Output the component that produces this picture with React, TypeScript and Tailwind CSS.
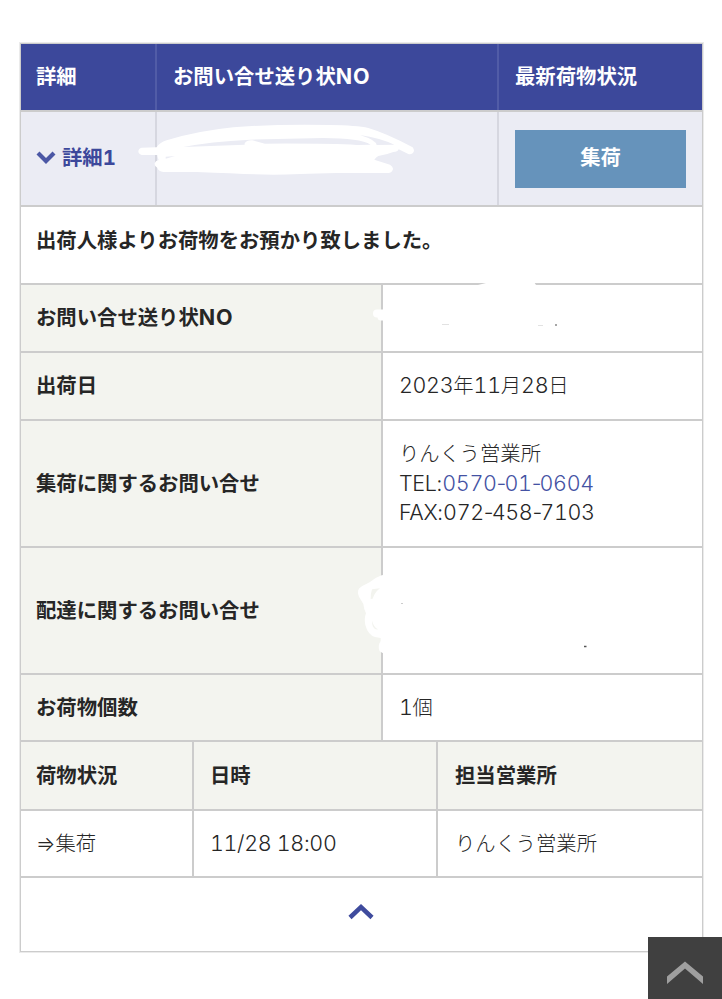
import React from 'react';
import clsx from 'clsx';

// Digits are even-width, hyphens keep their narrow form
const Latin: React.FC<{ children: string }> = ({ children }) => (
  <span className="text-[21.5px] leading-none tracking-[-0.35px] tabular-nums">
    {children.split(/(-)/).map((part, i) =>
      part === '-' ? <span key={i} className="proportional-nums tracking-[-1.800px]">-</span> : part
    )}
  </span>
);

const InvoiceNoLabel = () => (
  <span>
    お問い合せ送り状<span className="text-[21.5px] leading-none tracking-[0.9px]">NO</span>
  </span>
);

const details = [
  { label: <InvoiceNoLabel />, height: 'h-[68px]' },
  {
    label: '出荷日',
    height: 'h-[68px]',
    value: (
      <>
        <Latin>2023</Latin>年<Latin>11</Latin>月<Latin>28</Latin>日
      </>
    ),
  },
  {
    label: '集荷に関するお問い合せ',
    height: 'h-[127px]',
    value: (
      <>
        りんくう営業所
        <br />
        <Latin>TEL</Latin>:<a className="text-[#4452a3]"><Latin>0570-01-0604</Latin></a>
        <br />
        <Latin>FAX</Latin>:<Latin>072-458-7103</Latin>
      </>
    ),
  },
  { label: '配達に関するお問い合せ', height: 'h-[127px]' },
  { label: 'お荷物個数', height: 'h-[67px]', value: <><Latin>1</Latin>個</> },
];

const line = 'border-[#cccccc]';

const Scribbles: React.FC = () => (
  <svg className="pointer-events-none absolute left-0 top-0" width="722" height="999" fill="none" stroke="#fff" strokeLinecap="round" strokeLinejoin="round">
    {/* Invoice number in the summary row */}
    <g transform="translate(130 110) scale(0.3333)" stroke="none">
      <path
        fill="#fff"
        d="M35 113L80 112Q88 98 110 91Q200 63 310 52Q430 42 600 45Q680 46 715 54Q770 70 848 112Q856 122 848 130Q841 134 835 132L806 118Q803 126 790 126Q770 134 745 138Q738 142 733 149L780 164Q790 170 789 178Q786 189 775 189H620Q500 193 430 194Q360 193 200 186H100Q86 184 82 173Q73 169 74 160Q76 152 86 150Q82 142 82 135H35Q25 132 25 124Q26 115 35 113Z"
      />
      <path fill="#ebecf4" d="M160 111Q240 95 360 89L580 84Q690 84 722 104L680 105Q600 100 405 101L367 91Q350 90 344 100L344 104Z" />
      <path fill="#ebecf4" d="M690 75Q750 84 793 104L740 105Q738 90 690 75Z" />
      <path fill="#ebecf4" d="M107 140L135 138L107 146Z" />
    </g>

    {/* Invoice number in the detail row */}
    <path d="M377 313.500H394" strokeWidth="8" />
    <path d="M381 317H394" strokeWidth="7" />
    <path d="M474 286L490 282H534L538 288H474Z" fill="#fff" stroke="none" />
    <path d="M442 324.500H449M538 325.500H543" stroke="#e2e2e2" strokeWidth="1" strokeLinecap="butt" />
    <path d="M555 325H557" stroke="#888" strokeWidth="1.500" strokeLinecap="butt" />

    {/* Delivery office */}
    <g transform="translate(340 540) scale(0.3333)" stroke="none">
      <path
        fill="#fff"
        d="M145 103L125 106Q105 113 90 126Q65 138 58 145Q50 155 57 170Q66 185 70 192Q72 210 78 220Q72 235 76 255Q84 285 105 291L122 294V303Q112 318 119 334L128 339H145Z"
      />
      <path fill="#f3f4ef" d="M96 148L120 145Q105 155 98 176L92 177Q92 160 96 148Z" />
      <path fill="#f3f4ef" d="M97 242Q100 260 114 268Q105 270 99 260Q95 252 97 242Z" />
    </g>
    <path d="M401 603.500H403" stroke="#ccc" strokeWidth="1" strokeLinecap="butt" />
    <path d="M584 646.500H586.500" stroke="#555" strokeWidth="1.500" strokeLinecap="butt" />
  </svg>
);

export default function App() {
  return (
    <div lang="ja" className="relative h-[999px] w-[722px] overflow-hidden bg-white pl-5 pt-[43px] font-['Inter','Noto_Sans_CJK_JP',sans-serif] text-[20.35px] leading-[29.5px] text-[#262626]">
      <div className="w-[683px] border border-[#cccccc] ring-1 ring-[#ebebeb]">
        {/* Summary */}
        <div className="grid h-[68px] grid-cols-[136px_342px_1fr] border-b-2 border-[#cccccc] bg-[#3c489b] font-bold text-white">
          <div className="flex items-center border-r-2 border-[#515ca7] pl-[15px]">詳細</div>
          <div className="flex items-center border-r-2 border-[#515ca7] pl-4"><InvoiceNoLabel /></div>
          <div className="flex items-center pl-4">最新荷物状況</div>
        </div>
        <div className={clsx('grid h-[95px] grid-cols-[136px_342px_1fr] border-b-2 bg-[#ebecf4]', line)}>
          <div className="flex items-center border-r-2 border-[#d6d7e0] pb-0.5 pl-[15px] font-bold tabular-nums text-[#3c489b]">
            <svg width="20" height="13" viewBox="0 0 20 13" fill="none" stroke="#4b57a5" strokeWidth="4.200" className="mr-1.5">
              <path d="M2 2L10 10L18 2" />
            </svg>
            詳細1
          </div>
          <div className="border-r-2 border-[#d6d7e0]" />
          <div className="flex items-center pl-4">
            <div className="flex h-[58px] w-[171px] items-center justify-center bg-[#6693bb] pb-0.5 font-bold text-white">集荷</div>
          </div>
        </div>
        <div className={clsx('h-[78px] border-b-2 pl-[15px] pt-[19px] font-bold', line)}>
          出荷人様よりお荷物をお預かり致しました。
        </div>

        {/* Details */}
        {details.map((row, i) => (
          <div key={i} className={clsx('grid grid-cols-[362px_1fr] border-b-2', line, row.height)}>
            <div className={clsx('flex items-center border-r-2 bg-[#f3f4ef] pl-[15px] font-bold', line)}>{row.label}</div>
            <div className="flex items-center pl-4 font-light">
              <div>{row.value}</div>
            </div>
          </div>
        ))}

        {/* History */}
        <div className={clsx('grid h-[69px] grid-cols-[173px_244px_1fr] border-b-2 bg-[#f3f4ef] font-bold', line)}>
          <div className={clsx('flex items-center border-r-2 pl-[15px]', line)}>荷物状況</div>
          <div className={clsx('flex items-center border-r-2 pl-4', line)}>日時</div>
          <div className="flex items-center pl-[17px]">担当営業所</div>
        </div>
        <div className={clsx('grid h-[67px] grid-cols-[173px_244px_1fr] border-b-2 font-light', line)}>
          <div className={clsx('flex items-center border-r-2 pl-[15px]', line)}>⇒集荷</div>
          <div className={clsx('flex items-center border-r-2 pl-4', line)}><Latin>11/28 18:00</Latin></div>
          <div className="flex items-center pl-[17px]">りんくう営業所</div>
        </div>
        <div className="flex h-[73px] items-center justify-center pb-[7px] pr-0.5">
          <svg width="26" height="17" viewBox="0 0 26 17" fill="none" stroke="#3f4b9d" strokeWidth="4.500">
            <path d="M2 14.500L13 4L24 14.500" />
          </svg>
        </div>
      </div>

      <Scribbles />

      {/* Page top */}
      <button className="absolute left-[648px] top-[937px] flex h-[62px] w-[74px] justify-center bg-[#404040] pt-[24px]">
        <svg width="36" height="24" viewBox="0 0 36 24" fill="#9f9f9f">
          <path d="M0 15.500L18 0.500L36 15.500V23L18 7.500L0 23Z" />
        </svg>
      </button>
    </div>
  );
}
